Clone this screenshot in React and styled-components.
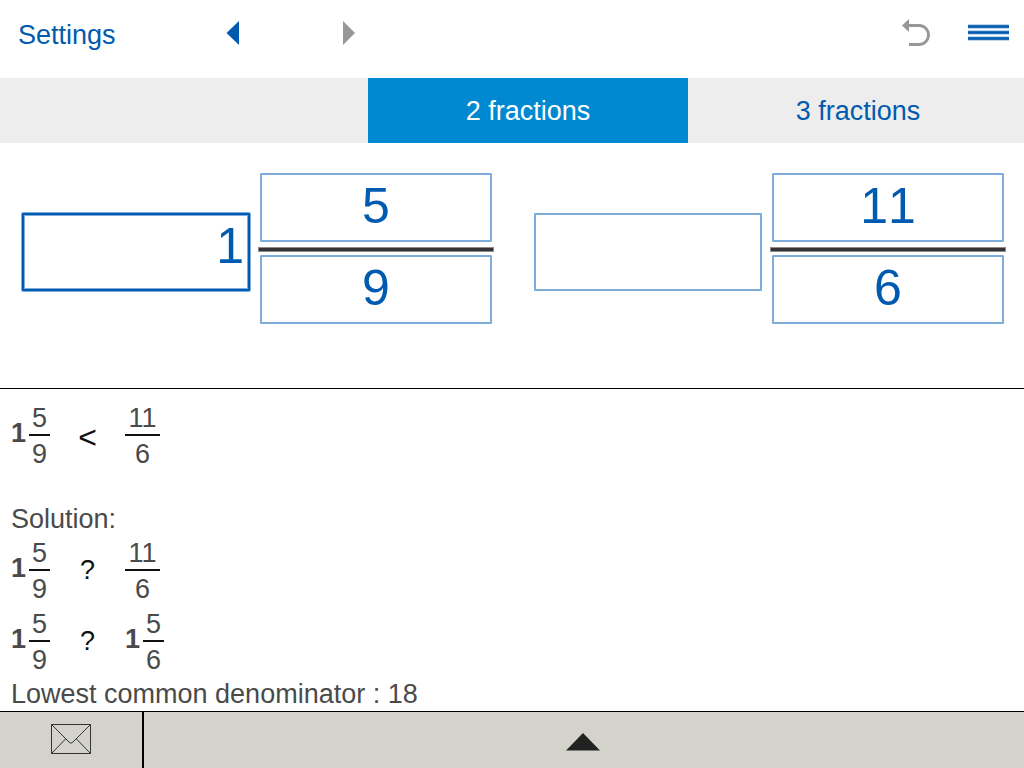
import React, { useState } from "react";
import styled, { createGlobalStyle } from "styled-components";

function Fraction({ whole, top, bottom, wide }) {
  return (
    <Mixed>
      {whole && <Whole>{whole}</Whole>}
      <Stack $wide={wide}>
        <Num>{top}</Num>
        <Bar />
        <Num>{bottom}</Num>
      </Stack>
    </Mixed>
  );
}

function FractionForm({ name, value, active }) {
  const [form, setForm] = useState(value);

  const onChange = (e) => {
    setForm({ ...form, [e.target.name]: e.target.value });
  };

  return (
    <Form>
      <WholeInput
        type="text"
        name="whole"
        aria-label={name + " whole number"}
        $active={active}
        value={form.whole}
        onChange={onChange}
      />
      <FormStack>
        <NumInput type="text" name="top" aria-label={name + " numerator"} value={form.top} onChange={onChange} />
        <Line />
        <NumInput type="text" name="bottom" aria-label={name + " denominator"} value={form.bottom} onChange={onChange} />
      </FormStack>
    </Form>
  );
}

function App() {
  const [tab, setTab] = useState(2);

  return (
    <Main>
      <GlobalStyle />
      <Header>
        <SettingsButton>Settings</SettingsButton>
        <Arrows>
          <IconButton aria-label="Previous">
            <svg width="14" height="24" viewBox="0 0 14 24">
              <path d="M0.5 12 L13 0 V24 Z" fill="#005bb0" />
            </svg>
          </IconButton>
          <IconButton aria-label="Next">
            <svg width="14" height="24" viewBox="0 0 14 24">
              <path d="M1 0 L13 12 L1 24 Z" fill="#979797" />
            </svg>
          </IconButton>
        </Arrows>
        <Tools>
          <IconButton aria-label="Undo">
            <svg width="28" height="28" viewBox="0 0 28 28">
              <path d="M0 6.5 L7 0 V13 Z" fill="#979797" />
              <path d="M6 6.5 H17 A9.5 9.5 0 0 1 17 25.5 H7" fill="none" stroke="#979797" strokeWidth="2.8" />
            </svg>
          </IconButton>
          <IconButton aria-label="Menu">
            <svg width="41" height="18" viewBox="0 0 41 18">
              <path d="M0 2.5 H41 M0 8.5 H41 M0 14.5 H41" stroke="#7facd8" strokeWidth="4" />
              <path d="M0 2.5 H41 M0 8.5 H41 M0 14.5 H41" stroke="#005bb0" strokeWidth="2.4" />
            </svg>
          </IconButton>
        </Tools>
      </Header>

      <Tabs>
        <Tab $active={tab === 2} onClick={() => setTab(2)}>2 fractions</Tab>
        <LastTab $active={tab === 3} onClick={() => setTab(3)}>3 fractions</LastTab>
      </Tabs>

      <Entry>
        <FractionForm name="First" value={{ whole: "1", top: "5", bottom: "9" }} active />
        <FractionForm name="Second" value={{ whole: "", top: "11", bottom: "6" }} />
      </Entry>

      <Result>
        <Compare>
          <Fraction whole="1" top="5" bottom="9" />
          <LessSign>&lt;</LessSign>
          <Fraction top="11" bottom="6" wide />
        </Compare>
        <SolutionTitle>Solution:</SolutionTitle>
        <Compare>
          <Fraction whole="1" top="5" bottom="9" />
          <Sign>?</Sign>
          <Fraction top="11" bottom="6" wide />
        </Compare>
        <Compare>
          <Fraction whole="1" top="5" bottom="9" />
          <Sign>?</Sign>
          <Fraction whole="1" top="5" bottom="6" />
        </Compare>
        <Note>Lowest common denominator : 18</Note>
      </Result>

      <Footer>
        <MailButton aria-label="Send by mail">
          <svg width="40" height="30" viewBox="0 0 40 30">
            <path
              d="M0.5 0.5 H39.5 V29.5 H0.5 Z M0.5 0.5 L18 18 Q20 20.5 22 18 L39.5 0.5 M0.5 29.5 L14.5 15 M39.5 29.5 L25.5 15"
              fill="none"
              stroke="#333"
            />
          </svg>
        </MailButton>
        <UpButton aria-label="Show keyboard">
          <svg width="36" height="18" viewBox="0 0 36 18">
            <path d="M18 0 L35 17.5 H1 Z" fill="#222" />
          </svg>
        </UpButton>
      </Footer>
    </Main>
  );
}

export default App;

const GlobalStyle = createGlobalStyle`
  * {
    box-sizing: border-box;
  }
  body {
    margin: 0;
    background-color: #fff;
    font-family: "Liberation Sans", Arial, sans-serif;
    font-size: 27px;
  }
  button, input {
    font-family: inherit;
    font-size: inherit;
    margin: 0;
    padding: 0;
    border: none;
    background: none;
  }
  svg {
    display: block;
  }
`;

const Main = styled.div`
  min-height: 100vh;
  display: flex;
  flex-direction: column;
`;

const Header = styled.div`
  height: 78px;
  display: flex;
  align-items: flex-start;
  padding: 19px 15px 0 18px;
`;

const SettingsButton = styled.button`
  line-height: 32px;
  color: #005bb0;
`;

const Arrows = styled.div`
  display: flex;
  gap: 102px;
  margin-left: 110px;
  padding-top: 2px;
`;

const IconButton = styled.button`
  display: block;
`;

const Tools = styled.div`
  display: flex;
  align-items: center;
  gap: 38px;
  margin-left: auto;
`;

const Tabs = styled.div`
  height: 65px;
  display: flex;
  justify-content: flex-end;
  background-color: #ededed;
`;

const Tab = styled.button`
  width: 320px;
  padding-top: 2px;
  color: ${(props) => (props.$active ? "#fff" : "#005bb0")};
  background-color: ${(props) => (props.$active ? "#0089d0" : "transparent")};
`;

const LastTab = styled(Tab)`
  width: 336px;
  padding-left: 4px;
`;

const Entry = styled.div`
  display: flex;
  height: 246px;
  padding-top: 30px;
  border-bottom: 1px solid #000;
`;

const Form = styled.div`
  flex: 1;
  display: grid;
  grid-template-columns: 228fr 236fr;
  align-items: start;
  gap: 8px;
  padding: 0 18px 0 22px;
`;

const FormInput = styled.input`
  width: 100%;
  min-width: 0;
  border: 2px solid #7facd8;
  border-radius: 1px;
  color: #005bb0;
  font-size: 50px;
  font-kerning: none;
  outline: none;
`;

const WholeInput = styled(FormInput)`
  height: 78px;
  margin-top: 40px;
  padding: 0 4px 12px 0;
  text-align: right;
  ${(props) =>
    props.$active &&
    `
    border-color: #005bb0;
    box-shadow: 0 0 0 1px #7facd8, inset 0 0 0 1px #7facd8;
  `}
`;

const FormStack = styled.div`
  display: flex;
  flex-direction: column;
  padding: 0 2px;
`;

const NumInput = styled(FormInput)`
  height: 69px;
  padding-bottom: 4px;
  text-align: center;
`;

const Line = styled.div`
  height: 5px;
  margin: 5px -2px 3px;
  background-color: #333;
  border: 1px solid #8f8c8c;
`;

const Result = styled.div`
  flex: 1;
  padding: 11px 11px 0;
  color: #4a4a4a;
`;

const Compare = styled.div`
  display: flex;
  align-items: center;
  height: 71px;
`;

const Mixed = styled.div`
  display: flex;
  align-items: center;
`;

const Whole = styled.div`
  width: 18px;
  padding-bottom: 4px;
  font-weight: 700;
`;

const Stack = styled.div`
  width: ${(props) => (props.$wide ? "35px" : "21px")};
  text-align: center;
`;

const Num = styled.div`
  line-height: 34px;
`;

const Bar = styled.div`
  height: 2px;
  margin: -1px 0 1px;
  background-color: #111;
`;

const Sign = styled.div`
  width: 75px;
  text-align: center;
  color: #111;
`;

const LessSign = styled(Sign)`
  padding-top: 4px;
  font-size: 32px;
`;

const SolutionTitle = styled.div`
  line-height: 32px;
  padding-top: 2px;
  margin-top: 30px;
`;

const Note = styled.div`
  line-height: 32px;
  padding-top: 1px;
`;

const Footer = styled.div`
  height: 57px;
  display: flex;
  border-top: 1px solid #000;
  background-color: #d3d3cb;
`;

const MailButton = styled.button`
  width: 144px;
  display: flex;
  justify-content: center;
  align-items: center;
  padding-bottom: 2px;
  border-right: 2px solid #000;
`;

const UpButton = styled.button`
  flex: 1;
  display: flex;
  justify-content: center;
  align-items: center;
  padding: 4px 2px 0 0;
`;
